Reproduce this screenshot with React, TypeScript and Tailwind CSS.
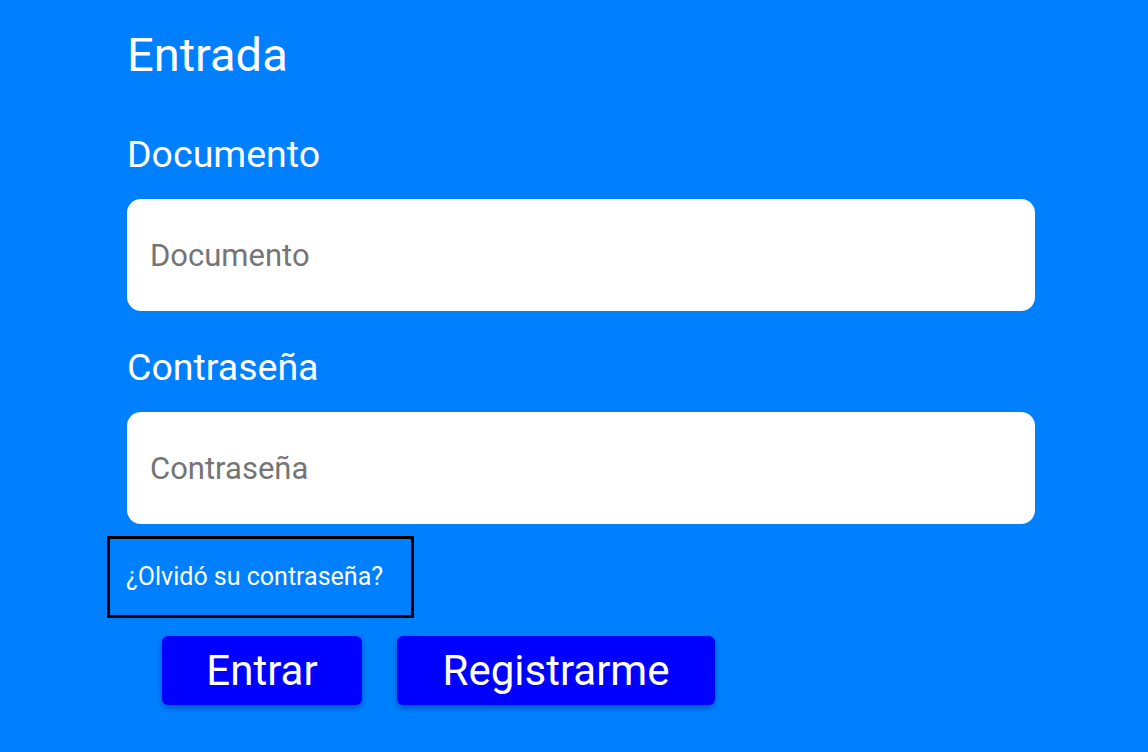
import React from 'react';

const Field: React.FC<{ label: string; type?: string }> = ({ label, type = 'text' }) => (
  <div className="flex flex-col">
    <label className="text-[37.5px] leading-[37px] font-normal text-white">{label}</label>
    <input
      type={type}
      placeholder={label}
      className="mt-[26px] h-[112px] w-full rounded-[14px] bg-white px-[23px] text-[31px] text-black outline-none placeholder:text-[#757575]"
    />
  </div>
);

export default function App() {
  return (
    <div className="min-h-[752px] w-full bg-[#0080ff] pl-[127px] pt-[31px] font-['Roboto',sans-serif]">
      <div className="w-[908px]">
        <h1 className="text-[47px] leading-[48px] font-normal text-white">Entrada</h1>

        <div className="mt-[57px] flex flex-col gap-[38px]">
          <Field label="Documento" />
          <Field label="Contraseña" type="password" />
        </div>

        <div className="-ml-[20px] mt-[12px] flex h-[82px] w-[307px] items-center border-[3px] border-black pl-[16px]">
          <a href="#" className="text-[25px] text-white">
            ¿Olvidó su contraseña?
          </a>
        </div>

        <div className="ml-[35px] mt-[18px] flex gap-[35px]">
          <button className="h-[69px] w-[200px] rounded-[6px] bg-[#0000ff] text-[42px] text-white shadow-[0_3px_6px_rgba(0,0,80,0.35)]">
            Entrar
          </button>
          <button className="h-[69px] w-[318px] rounded-[6px] bg-[#0000ff] text-[42px] text-white shadow-[0_3px_6px_rgba(0,0,80,0.35)]">
            Registrarme
          </button>
        </div>
      </div>
    </div>
  );
}
